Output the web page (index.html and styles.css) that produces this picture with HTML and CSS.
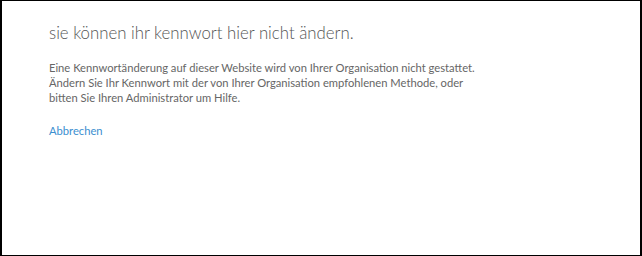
FILE: index.html
```html
<!DOCTYPE html>
<html lang="de">
<head>
  <meta charset="UTF-8">
  <title>Kennwort ändern</title>
  <link rel="stylesheet" href="styles.css">
</head>
<body>
  <div class="frame">
    <div class="content">
      <h1>sie können ihr kennwort hier nicht ändern.</h1>
      <p>Eine Kennwortänderung auf dieser Website wird von Ihrer Organisation nicht gestattet.<br>
      Ändern Sie Ihr Kennwort mit der von Ihrer Organisation empfohlenen Methode, oder<br>
      bitten Sie Ihren Administrator um Hilfe.</p>
      <a href="#" class="cancel">Abbrechen</a>
    </div>
  </div>
</body>
</html>
```

FILE: styles.css
```css
* {
  margin: 0;
  padding: 0;
  box-sizing: border-box;
}

body {
  font-family: Lato, "Open Sans", sans-serif;
  background: white;
  width: 642px;
  height: 256px;
}

.frame {
  width: 642px;
  height: 256px;
  border: 1px solid black;
  border-left-width: 2px;
  border-right-width: 2px;
  background: white;
}

.content {
  padding: 22px 0 0 47px;
}

h1 {
  font-size: 16.8px;
  font-weight: 300;
  color: #555;
  line-height: 20px;
  margin-bottom: 17px;
}

p {
  font-size: 11.2px;
  color: #666;
  line-height: 15px;
  margin-bottom: 18px;
}

.cancel {
  display: block;
  font-size: 11.2px;
  line-height: 15px;
  color: #3c8fd0;
  text-decoration: none;
}
```
